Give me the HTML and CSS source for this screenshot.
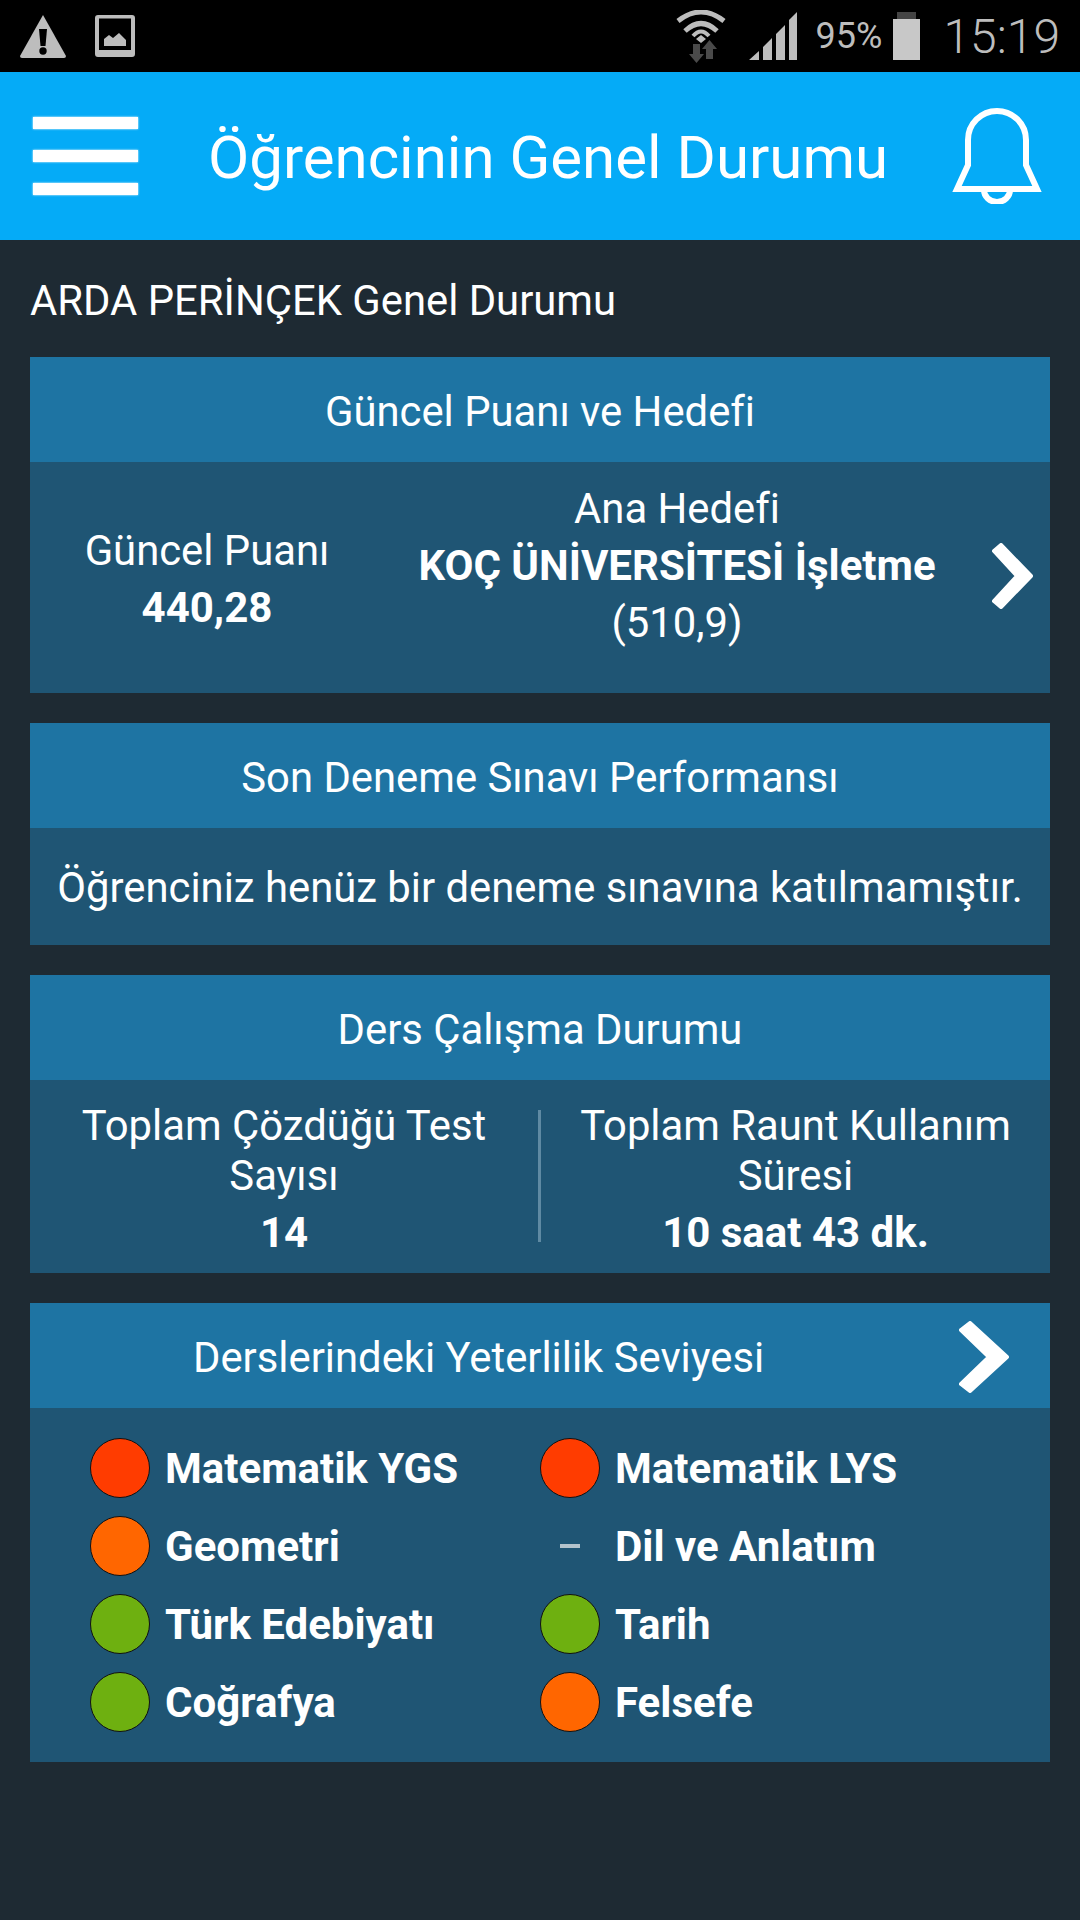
FILE: index.html
```html
<!DOCTYPE html>
<html lang="tr">
<head>
    <meta charset="UTF-8">
    <meta name="viewport" content="width=device-width, initial-scale=1.0">
    <title>Öğrencinin Genel Durumu</title>
    <link rel="stylesheet" href="styles.css">
</head>
<body>
    <div class="statusBar">
        <svg class="warnIcon" viewBox="0 0 46 43" width="46" height="43">
            <path d="M23 0 L46 41 Q46 43 44 43 L2 43 Q0 43 0 41 Z" fill="#bdbdbd"/>
            <path d="M19 14 H27 L25.500 31 H20.500 Z" fill="#000"/>
            <circle cx="23" cy="36" r="3.700" fill="#000"/>
        </svg>
        <svg class="picIcon" viewBox="0 0 40 42" width="40" height="42">
            <path fill-rule="evenodd" d="M3 0 H37 Q40 0 40 3 V39 Q40 42 37 42 H3 Q0 42 0 39 V3 Q0 0 3 0 Z M4 3.500 V35 H36 V3.500 Z" fill="#bdbdbd"/>
            <path d="M9 31 V24 L14 20 L18 23 L24 18 L31 25 V31 Z" fill="#bdbdbd"/>
        </svg>
        <div class="statusRight">
            <svg class="wifiIcon" viewBox="0 0 50 53" width="50" height="53">
                <path d="M2 11 Q25 -7 48 11" fill="none" stroke="#bdbdbd" stroke-width="5"/>
                <path d="M9 21 Q25 6 41 21" fill="none" stroke="#bdbdbd" stroke-width="5"/>
                <path d="M17 26 Q25 17 33 26" fill="none" stroke="#bdbdbd" stroke-width="4"/>
                <path d="M20 29 L25 25 L30 29 L25 33 Z" fill="#bdbdbd"/>
                <path d="M17 34 H24 V44 H28 L20.500 53 L13 44 H17 Z" fill="#4a4a4a"/>
                <path d="M33.500 30 L41 39 H37 V49 H30 V39 H26 Z" fill="#4a4a4a"/>
            </svg>
            <svg class="signalIcon" viewBox="0 0 48 48" width="48" height="48">
                <path d="M0 48 L10 39 V48 Z M14 35 L23 26 V48 H14 Z M27 22 L36 13 V48 H27 Z M40 8 L48 0 V48 H40 Z" fill="#bdbdbd"/>
            </svg>
            <span class="battery">95%</span>
            <div class="batteryIcon"></div>
            <span class="clock">15:19</span>
        </div>
    </div>

    <header class="appBar">
        <div class="menuBtn"><span></span><span></span><span></span></div>
        <h1>Öğrencinin Genel Durumu</h1>
        <svg class="bellIcon" viewBox="0 0 90 96" width="90" height="96">
            <path d="M32 82 A13 12 0 0 0 58 82" fill="none" stroke="#fff" stroke-width="6"/>
            <path d="M5 81 L16 57 V32 A29 29 0 0 1 74 32 V57 L85 81 Z" fill="none" stroke="#fff" stroke-width="6"/>
        </svg>
    </header>

    <main class="content">
        <p class="pageTitle">ARDA PERİNÇEK Genel Durumu</p>

        <section class="card">
            <div class="cardHead">Güncel Puanı ve Hedefi</div>
            <div class="cardBody scoreBody">
                <div class="scoreCol">
                    <div>Güncel Puanı</div>
                    <b>440,28</b>
                </div>
                <div class="targetCol">
                    <div>Ana Hedefi</div>
                    <b>KOÇ ÜNİVERSİTESİ İşletme</b>
                    <div>(510,9)</div>
                </div>
                <svg class="chevron" viewBox="0 0 41 66" width="41" height="66">
                    <path d="M2 8 L9 2 L39 33 L9 64 L2 58 L25 33 Z" fill="#fff" stroke="#fff" stroke-width="4" stroke-linejoin="round"/>
                </svg>
            </div>
        </section>

        <section class="card">
            <div class="cardHead">Son Deneme Sınavı Performansı</div>
            <div class="cardBody noticeBody">Öğrenciniz henüz bir deneme sınavına katılmamıştır.</div>
        </section>

        <section class="card">
            <div class="cardHead">Ders Çalışma Durumu</div>
            <div class="cardBody studyBody">
                <div class="studyCol">
                    <div class="studyLabel">Toplam Çözdüğü Test Sayısı</div>
                    <b>14</b>
                </div>
                <div class="studyCol second">
                    <div class="studyLabel">Toplam Raunt Kullanım Süresi</div>
                    <b>10 saat 43 dk.</b>
                </div>
            </div>
        </section>

        <section class="card">
            <div class="cardHead levelHead">
                <span>Derslerindeki Yeterlilik Seviyesi</span>
                <svg class="chevron big" viewBox="0 0 50 72" width="50" height="72">
                    <path d="M2 9 L11 2 L48 36 L11 70 L2 63 L30 36 Z" fill="#fff" stroke="#fff" stroke-width="4" stroke-linejoin="round"/>
                </svg>
            </div>
            <div class="cardBody levelGrid">
                <div class="level"><i class="dot red"></i>Matematik YGS</div>
                <div class="level"><i class="dot red"></i>Matematik LYS</div>
                <div class="level"><i class="dot orange"></i>Geometri</div>
                <div class="level"><i class="dash"></i>Dil ve Anlatım</div>
                <div class="level"><i class="dot green"></i>Türk Edebiyatı</div>
                <div class="level"><i class="dot green"></i>Tarih</div>
                <div class="level"><i class="dot green"></i>Coğrafya</div>
                <div class="level"><i class="dot orange"></i>Felsefe</div>
            </div>
        </section>
    </main>
</body>
</html>
```

FILE: styles.css
```css
* {
    box-sizing: border-box;
}

html, body {
    margin: 0;
    height: 1920px;
    background-color: #1e2a33;
    color: #fff;
    font-family: Roboto, sans-serif;
    overflow: hidden;
}

.statusBar {
    height: 72px;
    background-color: #000;
    display: flex;
    align-items: center;
    padding-left: 20px;
}

.picIcon {
    margin-left: 29px;
}

.statusRight {
    margin-left: auto;
    display: flex;
    align-items: center;
    padding-right: 20px;
    color: #bdbdbd;
}

.signalIcon {
    margin-left: 23px;
}

.battery {
    font-size: 36px;
    margin-left: 19px;
}

.batteryIcon {
    width: 27px;
    height: 41px;
    margin-left: 11px;
    margin-top: 7px;
    background-color: #c8c8c8;
    position: relative;
}

.batteryIcon::before {
    content: "";
    position: absolute;
    top: -7px;
    left: 4px;
    width: 19px;
    height: 7px;
    background-color: #444;
}

.clock {
    font-size: 48px;
    margin-left: 23px;
    font-weight: 300;
}

.appBar {
    height: 168px;
    background-color: #05abf7;
    display: flex;
    align-items: center;
    padding-left: 33px;
}

.menuBtn {
    width: 105px;
    height: 78px;
    display: flex;
    flex-direction: column;
    justify-content: space-between;
}

.menuBtn span {
    display: block;
    height: 12px;
    background-color: #fff;
    box-shadow: 0 0 2px #fff;
}

.appBar h1 {
    margin: 2px 0 0 70px;
    font-size: 60px;
    font-weight: 400;
}

.bellIcon {
    margin-left: 64px;
}

.content {
    padding: 0 30px;
}

.pageTitle {
    margin: 0;
    height: 117px;
    padding-top: 37px;
    font-size: 41.8px;
    line-height: 48px;
}

.card {
    margin-bottom: 30px;
    background-color: #1f5574;
    font-size: 41.8px;
    text-align: center;
}

.cardHead {
    height: 105px;
    padding-top: 3px;
    background-color: #1e74a3;
    display: flex;
    align-items: center;
    justify-content: center;
}

.cardBody b {
    display: block;
    font-size: 42px;
    font-weight: 700;
}

.scoreBody {
    height: 231px;
    display: flex;
    align-items: flex-start;
    line-height: 57px;
}

.scoreCol {
    width: 354px;
    padding-top: 60px;
}

.targetCol {
    width: 586px;
    padding-top: 18px;
}

.chevron {
    margin-left: 22px;
    margin-top: 81px;
    flex: none;
}

.noticeBody {
    height: 117px;
    line-height: 120px;
}

.studyBody {
    height: 193px;
    display: flex;
    padding-top: 30px;
    line-height: 50px;
}

.studyCol {
    width: 508px;
    height: 132px;
    padding: 0 26px;
}

.studyCol.second {
    border-left: 3px solid #5f8aa3;
    padding-left: 30px;
}

.studyLabel {
    margin-top: -9px;
    margin-bottom: 7px;
}

.levelHead {
    justify-content: flex-start;
    padding-left: 163px;
}

.chevron.big {
    margin: 0 0 0 195px;
}

.levelGrid {
    height: 354px;
    display: grid;
    grid-template-columns: 450px 1fr;
    grid-auto-rows: 78px;
    padding: 21px 0 0 60px;
}

.level {
    display: flex;
    align-items: center;
    font-size: 42px;
    font-weight: 700;
}

.dot {
    width: 60px;
    height: 60px;
    border-radius: 50%;
    border: 1px solid #111;
    margin-right: 15px;
}

.dash {
    width: 60px;
    height: 60px;
    margin-right: 15px;
    position: relative;
}

.dash::before {
    content: "";
    position: absolute;
    top: 28px;
    left: 20px;
    width: 20px;
    height: 4px;
    background-color: #b4c3cc;
}

.red {
    background-color: #ff3c00;
}

.orange {
    background-color: #ff6600;
}

.green {
    background-color: #6eb010;
}
```
